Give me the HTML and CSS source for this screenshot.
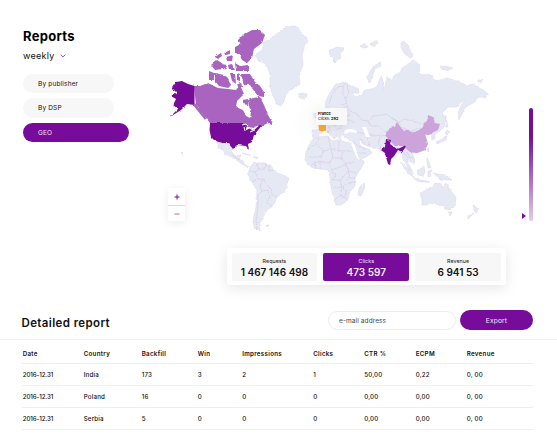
FILE: index.html
```html
<!DOCTYPE html>
<html lang="en">
<head>
<meta charset="utf-8">
<title>Reports</title>
<link rel="stylesheet" href="styles.css">
</head>
<body>
<main class="page">
  <section class="overview">
    <aside class="sidebar">
      <h1 class="title"><span>Reports</span></h1>
      <div class="period"><span>weekly</span><svg class="chevron" viewBox="0 0 6 4"><path d="M.7.6 3 2.9 5.3.6"/></svg></div>
      <nav class="filters">
        <a class="filter">By publisher</a>
        <a class="filter">By DSP</a>
        <a class="filter filter-active">GEO</a>
      </nav>
    </aside>
    <div class="map">
      <svg class="world" viewBox="160 15 340 225">
        <defs>
          <filter id="coast" x="-2%" y="-2%" width="104%" height="104%" color-interpolation-filters="sRGB"><feTurbulence type="fractalNoise" baseFrequency=".28" numOctaves="2" seed="4"/><feDisplacementMap in="SourceGraphic" scale="2.6" xChannelSelector="R" yChannelSelector="G"/></filter>
          <radialGradient id="halo"><stop offset="0" stop-color="#f3f3f3"/><stop offset="1" stop-color="#fff" stop-opacity="0"/></radialGradient>
        </defs>
        <ellipse cx="329" cy="122" rx="45" ry="38" fill="url(#halo)"/>
        <g filter="url(#coast)">
        <g class="land">
          <path d="M255 55 262 50 264 42 272 38 280 31 287 27 292 26 298 27 301 33 309 40 305 45 302 55 303 65 299 76 300 84 291 90 286 94 284 101 281 106 277 104 273 96 270 86 270 74 266 64 259 61Z"/>
          <path d="M298 94 302 93 307 94 306 98 302 99 299 97Z"/>
          <path d="M329 50 333 49 337 47 344 48 343 51 340 53 341 58 337 60 335 63 333 58 330 55Z"/>
          <path d="M360 46 364 44 368 47 364 48ZM370 44 376 40 378 43 373 47Z"/>
          <path d="M380 62 373 67 369 73 367 78 370 83 372 76 375 70 381 65Z"/>
          <path d="M401 43 405 42 409 48 413 55 410 58 404 53 401 47Z"/>
          <path d="M440 67 445 66 453 68 449 70 443 70ZM478 80 482 80 482 82 478 82Z"/>
          <path d="M325 106 327 98 331 91 335 85 343 82 349 85 358 88 359 93 352 93 355 97 360 95 365 90 371 89 377 87 380 78 382 76 384 91 387 77 391 81 395 75 400 73 402 68 407 65 413 60 420 65 419 71 421 75 427 74 433 76 435 82 440 80 447 78 454 80 462 83 467 86 473 84 479 88 483 90 488 94 485 98 478 97 475 102 467 106 463 112 459 120 458 112 462 104 466 100 460 103 457 107 448 107 442 113 446 118 444 127 438 133 435 135 435 140 432 140 431 134 427 135 424 136 427 143 425 150 417 153 412 154 415 159 414 164 411 162 407 159 410 167 413 172 409 170 405 162 403 160 402 154 398 152 393 157 389 165 386 158 384 153 380 149 373 148 367 146 358 140 361 147 365 148 369 149 372 153 366 157 360 160 357 153 352 144 351 140 345 137 343 135 340 135 341 140 338 137 334 131 330 130 337 136 334 139 328 132 325 130 319 134 318 137 313 138 312 130 319 130 319 125 318 123 324 121 329 117 333 115 335 109 332 106 330 110 326 109Z"/>
          <path d="M318 119 320 114 318 111 321 109 323 115 325 119ZM313 117 314 113 318 114 316 118Z"/>
          <path d="M313 139 320 137 328 136 332 141 338 140 350 143 352 147 357 159 364 161 364 163 358 173 355 178 355 186 350 192 347 201 341 205 336 205 333 195 331 188 330 177 328 170 320 169 313 168 308 165 305 160 306 152 310 143Z"/>
          <path d="M364 183 365 187 361 196 358 195 359 188Z"/>
          <path d="M216 141 223 143 228 143.500 233 148 232 153 236 156 240 154 239 159 243 161 245 165 249 166 247 167 242 164 235 159 225 154 221 145 222 150 219 148Z"/>
          <path d="M248 175 250 167 255 162 265 163 273 168 277 173 283 175 289 178 287 184 284 192 277 197 273 206 267 210 263 217 260 223 260 231 257 230 254 227 253 220 256 207 257 190 252 182Z"/>
          <path d="M242 153 250 155 250 156ZM253 157 258 157 257 159ZM182 152 183 155 181 153ZM266 225 269 225 267 227Z"/>
          <path d="M420 193 426 190 432 187 435 183 441 184 442 188 446 183 450 190 456 197 455 205 450 210 445 209 443 206 439 205 435 203 427 205 422 205 422 200ZM448 212 452 212 450 216Z"/>
          <path d="M473 205 475 206 478 209 476 213 474 210ZM474 213 468 219 468 216Z"/>
          <path d="M401 162 405 166 412 173 414 178 408 173 403 166ZM414 178 421 180 430 182 422 182 414 180ZM417 171 424 166 425 172 423 176 418 175ZM428 171 432 170 430 173 431 177 428 177ZM433 173 438 174 445 175 452 180 446 180 440 179ZM427 158 429 162 431 168 428 168 427 162Z"/>
          <path d="M447 130 450 132 447 135 445 133ZM447 136 446 140 439 143 436 142 442 139 445 136ZM446 116 448 127 446 127ZM428 148 429 151 427 151Z"/>
        </g>
        <g class="borders">
          <path d="M327 109 330 101 332 94 338 87 343 86 346 83M343 86 343 94 347 103 342 105M347 85 349 94 345 99M335 112 341 109 347 110 350 115 343 117 337 115M329 117 330 123 334 126 339 124 343 127M325 122 330 126 329 131M337 115 337 122 343 120 350 120 355 123M335 130 340 128 345 131M341 109 347 106 350 111 357 114 362 120 369 121 373 116 382 115 386 114 392 118 399 122 405 119 413 121 422 124 430 120M369 121 371 126 378 126 386 132 390 128M357 132 365 134 374 136 381 135 386 136M360 138 365 145M366 134 368 140 370 146M381 136 378 141 380 149M401 152 405 154 408 158M407 152 410 158 413 158M352 140 357 145 366 149M357 153 366 153"/>
          <path d="M319 138 316 144 311 147 307 151M316 144 324 151 331 149 328 137M331 149 339 151 339 141M339 151 352 151M324 151 321 157 309 157M331 149 333 158 329 163 320 161 315 163 311 165M333 158 341 158 343 152M341 158 346 164 355 162M329 163 331 170 340 167 346 164 348 171 357 173M320 161 320 169M315 163 316 169M331 171 336 175 332 180 340 180 344 176 348 171M340 180 342 187 333 188M342 187 348 183 355 182M342 187 340 195 335 200M342 187 347 192 344 197 340 195M344 197 347 199M348 171 350 177 355 179M350 177 346 181"/>
          <path d="M256 163 259 169 265 168 266 163M269 165 269 171 274 170M259 169 255 172 250 171M255 172 258 179 252 182M258 179 263 179 267 185 272 190 271 194 277 197M263 179 260 186 262 191 258 195 258 207 256 220 257 229M262 191 268 190 270 197 266 202 272 206M232 155 235 157 239 160M391 118 399 122 401 127 411 131 420 128"/>
        </g>
        <g class="canada">
          <path d="M194 86 200 86 208 83 218 88 228 89 236 90 240 85 244 94 237 101 236 107 243 110 246 116 250 118 251 112 249 106 248 100 253 98 260 97 264 105 268 115 272 122 272 125 268 123 262 126 254 128 248 127 243 123 210 123 206 118 201 112 196 105Z"/>
          <path d="M265 35 260 30 252 30 243 35 238 40 241 44 235 47 235 53 239 54 242 60 247 63 252 58 254 49 262 43Z"/>
          <path d="M241 74 250 74 255 82 260 86 264 92 264 97 258 96 254 91 250 85 244 85ZM215 73 224 75 228 78 231 85 228 88 219 86 215 81ZM209 71 214 73 214 80 209 80ZM211 65 217 60 222 63 224 69 215 70ZM221 64 227 65 225 70ZM226 57 233 55 232 61 227 61ZM228 65 232 64 235 70 229 70ZM235 63 240 66 249 65 249 71 236 71ZM230 73 235 73 236 84 232 81ZM237 73 240 74 240 81 237 80ZM215 57 221 53 222 56 218 59ZM224 53 230 50 230 54 226 55ZM243 100 248 99 248 105 243 104ZM237 83 241 82 242 87 238 87ZM241 55 246 57 244 60ZM268 120 273 123 269 124Z"/>
        </g>
        <g class="usa"><path d="M194.500 86 194.500 105 187 104 181 110 170 117 178 109 173 105 176 99 171 96 177 93 172 88 176 82 182 81 188 84ZM210 123 243 123 247 126 245 131 250 128 254 130 260 125 262 125 259 129 254 135 252 142 248 144 249 150 246 146 237 145 233 149 228 143 223 143 215 141 211 137 209.500 130Z"/></g>
        <path class="china" d="M385 135 390 128 394 127 397 122 402 129 408 131 415 132 419 130 423 127 424 123 427 121 428 115 433 117 435 123 440 124 438 130 434 132 429 135 425 134 427 140 428 144 425 150 417 153 410 152 403 146 395 146 389 140Z"/>
        <path class="india" d="M386 139 391 140 390 144 397 149 400 148 406 145 405 148 402 152 398 150 394 156 391 159 390 165 388 164 385 153 381 150 385 147Z"/>
        </g>
        <path class="sea" d="M344 131 348 129 352 129 357 131 357 133 350 132 345 134ZM362 127 366 127 368 132 370 137 366 137 364 132ZM351 140 355 146 358 156 360 160 357 158 353 149Z"/>
        <path class="canada" d="m193 105 2-2 5 7 6 8-1 2Z"/>
        <path class="lakes" d="m242 125 4-1 2 2m-4 1 1 4m3-4 3 2m-1 3 5-2m-1-2 4-2"/>
        <path class="france" d="M318.500 124.500h7.500v6l-4 1-3-1Z"/><path class="france" d="M327.500 131h1v1.700h-1Z"/>
      </svg>
      <div class="tooltip"><b>France</b><span>Clicks: <b>292</b></span></div>
      <div class="zoom">
        <button class="zoom-btn" aria-label="Zoom in"><svg viewBox="0 0 6 6"><path d="M3 .5v5M.5 3h5"/></svg></button>
        <button class="zoom-btn zoom-out" aria-label="Zoom out"><svg viewBox="0 0 6 6"><path d="M.5 3h5"/></svg></button>
      </div>
    </div>
    <div class="scale"><i class="pointer"></i><i class="bar"></i></div>
  </section>
  <section class="stats">
    <div class="stat"><span>Requests</span><strong>1 467 146 498</strong></div>
    <div class="stat stat-active"><span>Clicks</span><strong>473 597</strong></div>
    <div class="stat"><span>Revenue</span><strong>6 941 53</strong></div>
  </section>
  <section class="report">
    <header class="report-head">
      <h2>Detailed report</h2>
      <div class="email">e-mail address</div>
      <button class="export">Export</button>
    </header>
    <div class="table">
      <div class="row head"><span>Date</span><span>Country</span><span>Backfill</span><span>Win</span><span>Impressions</span><span>Clicks</span><span>CTR %</span><span>ECPM</span><span>Revenue</span></div>
      <div class="row"><span class="date">2016-12.31</span><span>India</span><span>173</span><span>3</span><span>2</span><span>1</span><span>50,00</span><span>0,22</span><span>0, 00</span></div>
      <div class="row"><span class="date">2016-12.31</span><span>Poland</span><span>16</span><span>0</span><span>0</span><span>0</span><span>0,00</span><span>0,00</span><span>0, 00</span></div>
      <div class="row"><span class="date">2016-12.31</span><span>Serbia</span><span>5</span><span>0</span><span>0</span><span>0</span><span>0,00</span><span>0,00</span><span>0, 00</span></div>
    </div>
  </section>
</main>
</body>
</html>
```
FILE: styles.css
```css
* { box-sizing: border-box; }
body { margin: 0; background: #fff; color: #111; font-family: Inter, "Liberation Sans", sans-serif; }
h1, h2 { margin: 0; }
button { padding: 0; border: 0; background: none; font-family: inherit; }
.page { width: 557px; height: 441px; overflow: hidden; }

.overview { display: grid; grid-template-columns: 160px 340px 1fr; height: 240px; }
.sidebar { padding: 28px 0 0 23px; }
.title { font-size: 13px; line-height: 16px; font-weight: 700; color: #000; letter-spacing: .3px; }
.period { display: flex; align-items: center; gap: 5.500px; margin-top: 3px; height: 16px; font-size: 9px; font-weight: 400; letter-spacing: .3px; }
.chevron { width: 6px; height: 4px; margin-top: 1px; fill: none; stroke: #a23bc0; stroke-width: 1; }
.filters { display: grid; gap: 5px; margin-top: 10.500px; }
.filter { width: 91px; height: 19.500px; padding-left: 15px; border-radius: 10px; background: #f7f7f7; font-size: 6.500px; line-height: 21px; letter-spacing: .17px; }
.filter-active { width: 106px; background: #760c99; color: #f4e6f8; }

.map { position: relative; padding-top: 15px; }
.world { display: block; width: 340px; height: 225px; }
.land { fill: #e5e9f4; stroke: #ddd3eb; stroke-width: .5; }
.borders { fill: none; stroke: #d6c6e5; stroke-width: .6; }
.canada { fill: #a864be; }
.usa, .india { fill: #760c99; }
.china { fill: #cca3da; }
.sea { fill: #fff; }
.lakes { fill: none; stroke: #fff; stroke-width: 1; }
.france { fill: #f7aa35; }
.tooltip { position: absolute; left: 156px; top: 108px; width: 31px; height: 17px; padding: 3px 0 0 2px; border-radius: 2px; background: rgba(250, 250, 250, .9); box-shadow: 0 3px 9px rgba(0, 0, 0, .05); font-size: 3.800px; line-height: 5.200px; white-space: nowrap; }
.tooltip > * { display: block; }
.zoom { position: absolute; left: 8px; top: 188px; width: 17px; height: 33px; border-radius: 2px; background: #fff; box-shadow: 0 2px 10px rgba(0, 0, 0, .08); }
.zoom-btn { display: grid; place-items: center; width: 17px; height: 18px; border-bottom: 1px solid #e4d3ea; }
.zoom-btn svg { width: 6px; height: 6px; stroke: #760c99; stroke-width: 1; }
.zoom-out { height: 15px; border: 0; opacity: .6; }
.scale { display: flex; align-items: flex-end; gap: 3px; padding: 108px 0 19px 22px; }
.pointer { width: 4px; margin-bottom: 2.500px; border: solid transparent; border-width: 3px 0 3px 4px; border-left-color: #760c99; }
.bar { width: 4px; height: 113px; border-radius: 2px; background: linear-gradient(#760c99 25%, #e3cbe9); }

.stats { display: flex; gap: 6px; width: 279.500px; height: 37px; margin: 8px 0 0 226.500px; padding: 5px; border-radius: 3px; background: #fff; box-shadow: 0 3px 14px rgba(0, 0, 0, .1); }
.stat { flex: 1; display: flex; flex-direction: column; align-items: center; padding-top: 5px; border-radius: 2px; background: #f7f7f7; height: 28px; }
.stat span { font-size: 5.300px; line-height: 7px; letter-spacing: .06px; }
.stat strong { font-size: 10px; line-height: 14px; font-weight: 600; white-space: nowrap; }
.stat-active { background: #760c99; color: #f7eafa; }

.report-head { display: grid; grid-template-columns: 306.500px 127.500px 73px; align-items: center; height: 54.500px; padding: 17px 0 0 21.500px; border-bottom: 1px solid #f0f0f0; }
.report-head h2 { padding-top: 6px; font-size: 11.500px; font-weight: 600; line-height: 14px; letter-spacing: .38px; }
.report-head .export { margin-left: 4.500px; }
.email { height: 19.500px; padding-left: 10px; border: 1px solid #ededed; border-radius: 10px; font-size: 6.500px; line-height: 18.500px; letter-spacing: .1px; color: #444; }
.export { width: 73px; height: 20px; padding-top: 1px; border-radius: 10px; background: #760c99; color: #f4e6f8; font-size: 6.700px; letter-spacing: .12px; }
.table { width: 511.500px; margin-left: 21.500px; }
.row { display: grid; grid-template-columns: 61px 58px 56px 44.500px 71px 51px 51.500px 51px 1fr; align-items: center; height: 22px; padding: 1px 0 0 1.200px; border-bottom: 1px solid #eee; font-size: 6.200px; font-weight: 500; letter-spacing: .18px; }
.date { letter-spacing: -.12px; }
.head { height: 24px; padding-top: 4px; font-weight: 600; letter-spacing: .3px; }
```
